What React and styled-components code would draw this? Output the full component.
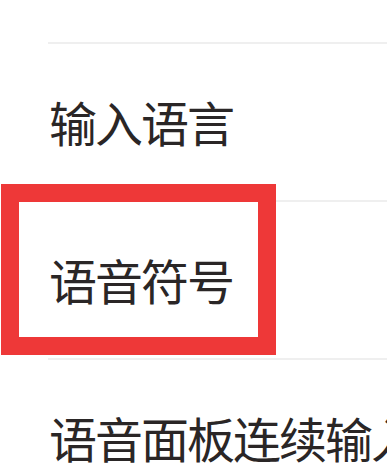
import React from "react";
import styled, { createGlobalStyle } from "styled-components";

const GlobalStyle = createGlobalStyle`
  html, body {
    margin: 0;
    padding: 0;
    background: #ffffff;
    overflow: hidden;
  }
  body {
    font-family: "Noto Sans CJK SC", "Noto Sans", sans-serif;
  }
`;

const Page = styled.div`
  position: relative;
  width: 387px;
  height: 468px;
  overflow: hidden;
  background: #ffffff;
  padding-top: 42px;
  box-sizing: border-box;
`;

const List = styled.ul`
  list-style: none;
  margin: 0 0 0 48px;
  padding: 0;
`;

const Row = styled.li`
  display: flex;
  align-items: center;
  height: 156px;
  border-top: 2px solid #efefef;
  padding-left: 1px;
  white-space: nowrap;
`;

const Label = styled.span`
  font-size: 48px;
  line-height: 1;
  color: #2a2626;
  letter-spacing: -2px;
  margin-top: -2px;
`;

const Highlight = styled.div`
  position: absolute;
  left: 1px;
  top: 184px;
  width: 275px;
  height: 171px;
  box-sizing: border-box;
  border: 18px solid #ee3838;
  pointer-events: none;
`;

const items = ["输入语言", "语音符号", "语音面板连续输入"];

const App = () => {
  return (
    <Page>
      <GlobalStyle />
      <List>
        {items.map((text) => (
          <Row key={text}>
            <Label>{text}</Label>
          </Row>
        ))}
      </List>
      <Highlight />
    </Page>
  );
};

export default App;
